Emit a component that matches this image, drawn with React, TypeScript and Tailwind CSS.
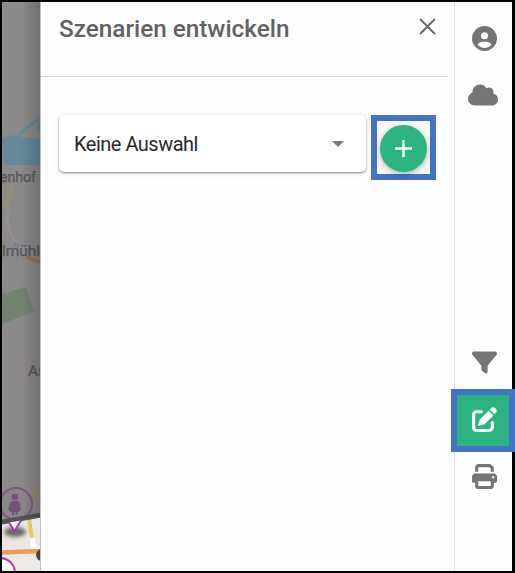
import React from "react";
import { FaCloud, FaFilter, FaPenToSquare, FaPrint, FaCircleUser } from "react-icons/fa6";

function MapStrip() {
  return (
    <svg width="38" height="569" viewBox="2 2 38 569" className="block shrink-0" fontFamily="Roboto, 'Noto Sans', sans-serif">
      <defs>
        <linearGradient id="edge" x1="0" x2="1">
          <stop offset="0.5" stopColor="#000" stopOpacity="0" />
          <stop offset="1" stopColor="#000" stopOpacity="0.2" />
        </linearGradient>
        <filter id="soft" x="-30%" y="-50%" width="160%" height="200%">
          <feGaussianBlur stdDeviation="2.2" />
        </filter>
      </defs>
      <rect x="2" y="2" width="39" height="569" fill="#8b8989" />
      <path d="M2 138Q14 133 22 137L41 139V165H5L2 158Z" fill="#65889a" />
      <path d="M19 135C27 127 34 124 41 116M41 122Q36 127 41 133" fill="none" stroke="#65889a" strokeWidth="3" />
      <path d="M11 185Q13 197 4 205M9 205Q4 226 15 241Q26 256 41 263" fill="none" stroke="#948e96" strokeWidth="3" />
      <path d="M9 184Q15 200 2 207" fill="none" stroke="#9c9065" strokeWidth="2.2" />
      <path d="M27 257Q34 261 41 262" fill="none" stroke="#95705b" strokeWidth="4" />
      <path d="M14 243L19 247" stroke="#65889a" strokeWidth="3" />
      <path d="M28 270Q31 289 38 311M2 327L41 312M2 437Q13 424 39 407" fill="none" stroke="#858d92" strokeWidth="1.5" />
      <path d="M2 294L26 287L34 311L2 324Z" fill="#738370" />
      <g fill="#555658" stroke="#555658" strokeWidth="0.25" fontSize="15.5">
        <text x="0" y="182" textLength="36" lengthAdjust="spacingAndGlyphs">enhof</text>
        <text x="2" y="256" textLength="38" lengthAdjust="spacingAndGlyphs">lmühl</text>
        <text x="28" y="376">As</text>
      </g>
      <path d="M41 487Q34 491 31 502" fill="none" stroke="#9b8a59" strokeWidth="3" />
      <path d="M2 524L41 517V571H2Z" fill="#ece8e3" />
      <path d="M29 519L32 538" stroke="#e7c860" strokeWidth="4" />
      <path d="M32 538L34 548L41 551" fill="none" stroke="#fff" strokeWidth="5" />
      <ellipse cx="15" cy="532" rx="11" ry="5" fill="#666360" filter="url(#soft)" />
      <path d="M2 552.5L41 551" stroke="#f19a5d" strokeWidth="4.5" />
      <circle cx="42" cy="555" r="6" fill="#48403d" />
      <circle cx="16" cy="504" r="16" fill="#898487" stroke="#805782" strokeWidth="2" />
      <circle cx="14.8" cy="497" r="3.2" fill="#765079" />
      <path d="M12 501H18Q20 502 21 510L19 511L17.5 506L19 511V512H17.5V515H15.5V512H14V515H12V512H10.5V511L12 506L10.5 511L8.5 510Q9.5 502 12 501Z" fill="#765079" />
      <path d="M2 522L41 515" stroke="#555455" strokeWidth="5" />
      <path d="M9 522.5L14.5 531L21 520.5" fill="#fff" stroke="#a13bae" strokeWidth="2" />
      <circle cx="0" cy="573" r="15" fill="#fff" stroke="#a144ac" strokeWidth="2" />
      <rect x="2" y="2" width="39" height="515" fill="url(#edge)" />
    </svg>
  );
}

function Sidebar() {
  return (
    <nav className="flex w-[58px] shrink-0 flex-col items-center border-l border-[#dedede] pt-[24px] text-[#757575]">
      <FaCircleUser className="ml-[2px] h-[25px] w-[25px] shrink-0" />
      <FaCloud className="mt-[32px] mr-px h-[24px] w-[30px] shrink-0" />
      <FaFilter className="mt-[243px] ml-[2px] h-[25px] w-[25px] shrink-0" />
      <div className="z-10 mt-[14px] mr-px flex h-[63px] w-[64px] shrink-0 items-center justify-center border-6 border-[#4472c4] bg-[#2bb482] pb-[2px] pl-[2px] text-white">
        <FaPenToSquare className="h-[25px] w-[25px]" />
      </div>
      <FaPrint className="mt-[12px] ml-[2px] h-[25px] w-[25px] shrink-0" />
    </nav>
  );
}

export default function App() {
  return (
    <div className="flex h-[573px] w-[515px] border-y-2 border-r-3 border-l-2 border-black bg-[#fefefe] font-['Roboto',sans-serif]">
      <MapStrip />
      <main className="flex w-[414px] shrink-0 flex-col border-l border-[#bbb]">
        <header className="mr-[6px] flex h-[75px] items-start justify-between border-b border-[#dadcdb] pr-[12px] pl-[18px]">
          <h1 className="pt-[11px] text-[24.3px] leading-8 font-medium text-[#616161]">Szenarien entwickeln</h1>
          <svg width="17" height="17" viewBox="0 0 17 17" className="mt-4" fill="none" stroke="#666" strokeWidth="1.8">
            <path d="M1 1L16 16M16 1L1 16" />
          </svg>
        </header>
        <div className="flex items-start pt-[38px] pl-[18px]">
          <button className="flex h-[57px] w-[307px] items-center justify-between rounded-[5px] bg-white pr-[22px] pl-[15px] text-[20px] tracking-[-0.5px] text-[#292929] shadow-[0_1px_2px_rgba(0,0,0,0.42),0_1px_6px_rgba(0,0,0,0.1)]">
            <span>Keine Auswahl</span>
            <svg width="12" height="6" viewBox="0 0 12 6" fill="#777"><path d="M0 0H12L6 6Z" /></svg>
          </button>
          <div className="ml-[5px] flex h-[65px] w-[65px] items-center justify-center border-6 border-[#4472c4] bg-[#fafafa] pt-[1px]">
            <button className="flex h-[47px] w-[47px] items-center justify-center rounded-full bg-[#2bb482] shadow-[0_2px_6px_rgba(0,0,0,0.3)]">
              <svg width="17" height="17" viewBox="0 0 17 17" stroke="#fff" strokeWidth="2.4"><path d="M8.5 0V17M0 8.5H17" /></svg>
            </button>
          </div>
        </div>
      </main>
      <Sidebar />
    </div>
  );
}
